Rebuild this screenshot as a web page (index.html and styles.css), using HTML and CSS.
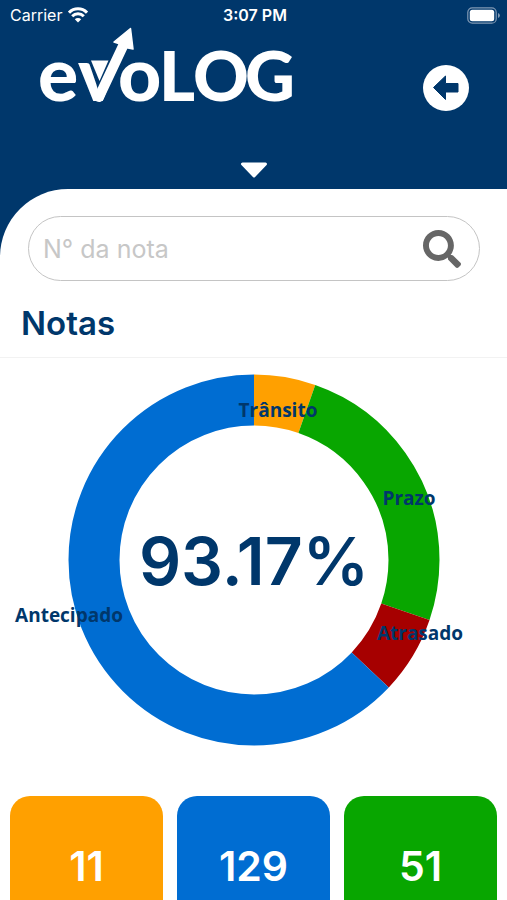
FILE: index.html
```html
<!DOCTYPE html>
<html lang="pt-BR">
<head>
  <meta charset="UTF-8">
  <meta name="viewport" content="width=device-width, initial-scale=1.0">
  <title>evoLOG - Notas</title>
  <link rel="stylesheet" href="styles.css">
</head>
<body>
  <div class="app">
    <div class="status-bar">
      <div class="carrier">
        <span>Carrier</span>
        <svg width="20" height="16" viewBox="0 0 20 16" fill="none" stroke="#fff" stroke-width="3">
          <path d="M1 5.600a12.500 12.500 0 0 1 18 0"/>
          <path d="M4.200 9.200a8.200 8.200 0 0 1 11.600 0"/>
          <path d="M10 15.500l-3.200-3.300a4.600 4.600 0 0 1 6.400 0z" fill="#fff" stroke="none"/>
        </svg>
      </div>
      <span class="time">3:07 PM</span>
      <svg class="battery" width="33" height="17" viewBox="0 0 33 17">
        <rect x="0.800" y="0.800" width="28.400" height="15.400" rx="4.500" fill="none" stroke="#8099b4" stroke-width="1.200"/>
        <rect x="2.800" y="2.800" width="24.400" height="11.400" rx="2.500" fill="#fff"/>
        <path d="M31 6v5a2.600 2.600 0 0 0 0-5z" fill="#8099b4"/>
      </svg>
    </div>

    <header class="header">
      <svg class="logo" width="266" height="99" viewBox="34 24 266 99" role="img" aria-label="evoLOG">
        <text class="logo-text" y="101" x="38 78 118 159 193 245"><tspan class="logo-small">evo</tspan>LOG</text>
        <path d="M89 56h33L99 88z" fill="#00376b"/>
        <path d="M99 97L123 46" stroke="#fff" stroke-width="10" stroke-linecap="round"/>
        <path d="M130.500 28.500L114 42l6 2 8 4 5 1z" fill="#fff" stroke="#fff" stroke-width="1.500" stroke-linejoin="round"/>
        <path d="M91 60.500h17.500l-9 20.500z" fill="#fff"/>
      </svg>
      <button class="back" type="button" aria-label="Voltar">
        <svg width="46" height="46" viewBox="0 0 46 46">
          <circle cx="23" cy="23" r="23" fill="#fff"/>
          <path d="M10.500 22.500L22.500 11v7.500H35v8.500H22.500v7.500z" fill="#00376b" stroke="#00376b" stroke-linejoin="round"/>
        </svg>
      </button>
    </header>

    <button class="toggle" type="button" aria-label="Expandir">
      <svg width="28" height="17" viewBox="0 0 28 17">
        <path d="M2.500 3h23L14 15z" fill="#fff" stroke="#fff" stroke-width="3" stroke-linejoin="round"/>
      </svg>
    </button>

    <main class="panel">
      <form class="search">
        <input type="text" id="nota" name="nota" placeholder="N° da nota" aria-label="N° da nota">
        <button class="search-button" type="submit" aria-label="Buscar">
          <svg width="38" height="38" viewBox="0 0 512 512">
            <path fill="#666" d="M505 442.700L405.300 343c-4.500-4.500-10.600-7-17-7H372c27.600-35.300 44-79.700 44-128C416 93.100 322.900 0 208 0S0 93.100 0 208s93.100 208 208 208c48.300 0 92.700-16.400 128-44v16.300c0 6.400 2.500 12.500 7 17l99.700 99.700c9.400 9.400 24.600 9.400 33.900 0l28.300-28.300c9.400-9.400 9.400-24.600.1-34zM208 336c-70.700 0-128-57.200-128-128 0-70.700 57.200-128 128-128 70.700 0 128 57.200 128 128 0 70.700-57.200 128-128 128z"/>
          </svg>
        </button>
      </form>

      <h1>Notas</h1>

      <svg class="chart" viewBox="0 0 507 403" role="img" aria-label="Notas por status">
        <g class="ring" transform="rotate(-90 254 202)">
          <circle class="transito" cx="254" cy="202" r="160" pathLength="360" stroke-dasharray="19.3 360"/>
          <circle class="prazo" cx="254" cy="202" r="160" pathLength="360" stroke-dasharray="89.6 360" stroke-dashoffset="-19.3"/>
          <circle class="atrasado" cx="254" cy="202" r="160" pathLength="360" stroke-dasharray="24.5 360" stroke-dashoffset="-108.9"/>
          <circle class="antecipado" cx="254" cy="202" r="160" pathLength="360" stroke-dasharray="226.6 360" stroke-dashoffset="-133.4"/>
        </g>
        <g class="labels">
          <text x="278" y="59">Trânsito</text>
          <text x="409" y="147">Prazo</text>
          <text x="420" y="282">Atrasado</text>
          <text x="69" y="264">Antecipado</text>
        </g>
        <text class="percent" x="254" y="227">93.17%</text>
      </svg>

      <div class="cards">
        <div class="card card-transito">11</div>
        <div class="card card-antecipado">129</div>
        <div class="card card-prazo">51</div>
      </div>
    </main>
  </div>
</body>
</html>
```

FILE: styles.css
```css
* {
  box-sizing: border-box;
}
body {
  margin: 0;
  font-family: Inter, 'Liberation Sans', sans-serif;
  color: #00376b;
  background-color: #fff;
}
button {
  padding: 0;
  border: none;
  background: none;
  cursor: pointer;
}
svg {
  display: block;
}
.app {
  display: flex;
  flex-direction: column;
  min-height: 100vh;
  background-color: #00376b;
}
.status-bar {
  display: grid;
  grid-template-columns: 1fr auto 1fr;
  align-items: center;
  height: 28px;
  padding: 2px 7px 0 10px;
  color: #fff;
  font-size: 16px;
}
.carrier {
  display: flex;
  align-items: center;
  gap: 6px;
}
.time {
  font-weight: 600;
}
.battery {
  justify-self: end;
}
.header {
  display: flex;
  justify-content: space-between;
  align-items: flex-end;
  height: 95px;
  padding: 0 38px 0 34px;
}
.back {
  margin-bottom: 12px;
}
.logo-text {
  font-family: Lato, sans-serif;
  font-size: 69px;
  font-weight: 900;
  fill: #fff;
}
.logo-small {
  font-size: 75px;
}
.toggle {
  align-self: center;
  margin: 38px 0 11px;
}
.panel {
  display: flex;
  flex: 1;
  flex-direction: column;
  padding-top: 27px;
  background-color: #fff;
  border-top-left-radius: 68px;
}
.search {
  display: flex;
  align-items: center;
  height: 65px;
  margin: 0 27px 0 28px;
  padding: 0 18px 0 14px;
  border: 1px solid #c4c4c4;
  border-radius: 33px;
}
.search input {
  flex: 1;
  min-width: 0;
  padding: 0;
  border: none;
  outline: none;
  background: none;
  font-family: inherit;
  font-size: 25px;
  color: #00376b;
}
.search input::placeholder {
  color: #c7c7c7;
}
h1 {
  margin: 0;
  padding: 22px 21px 14px;
  border-bottom: 1px solid #f2f2f2;
  font-size: 33px;
  line-height: 40px;
  font-weight: 600;
}
.chart {
  width: 100%;
}
.ring circle {
  fill: none;
  stroke-width: 51px;
}
.ring .transito {
  stroke: #ffa000;
}
.ring .prazo {
  stroke: #08a600;
}
.ring .atrasado {
  stroke: #a60000;
}
.ring .antecipado {
  stroke: #006dd2;
}
.labels text {
  font-family: 'Open Sans', sans-serif;
  font-size: 19px;
  font-weight: 700;
  text-anchor: middle;
  fill: #00376b;
}
.percent {
  font-size: 66px;
  font-weight: 600;
  text-anchor: middle;
  fill: #00376b;
}
.cards {
  display: flex;
  flex: 1;
  gap: 14px;
  padding: 35px 10px 0;
}
.card {
  flex: 1;
  padding-top: 46px;
  border-radius: 20px 20px 0 0;
  color: #fff;
  font-size: 41px;
  line-height: 48px;
  font-weight: 600;
  text-align: center;
}
.card-transito {
  background-color: #ffa000;
}
.card-antecipado {
  background-color: #006dd2;
}
.card-prazo {
  background-color: #08a600;
}
```
